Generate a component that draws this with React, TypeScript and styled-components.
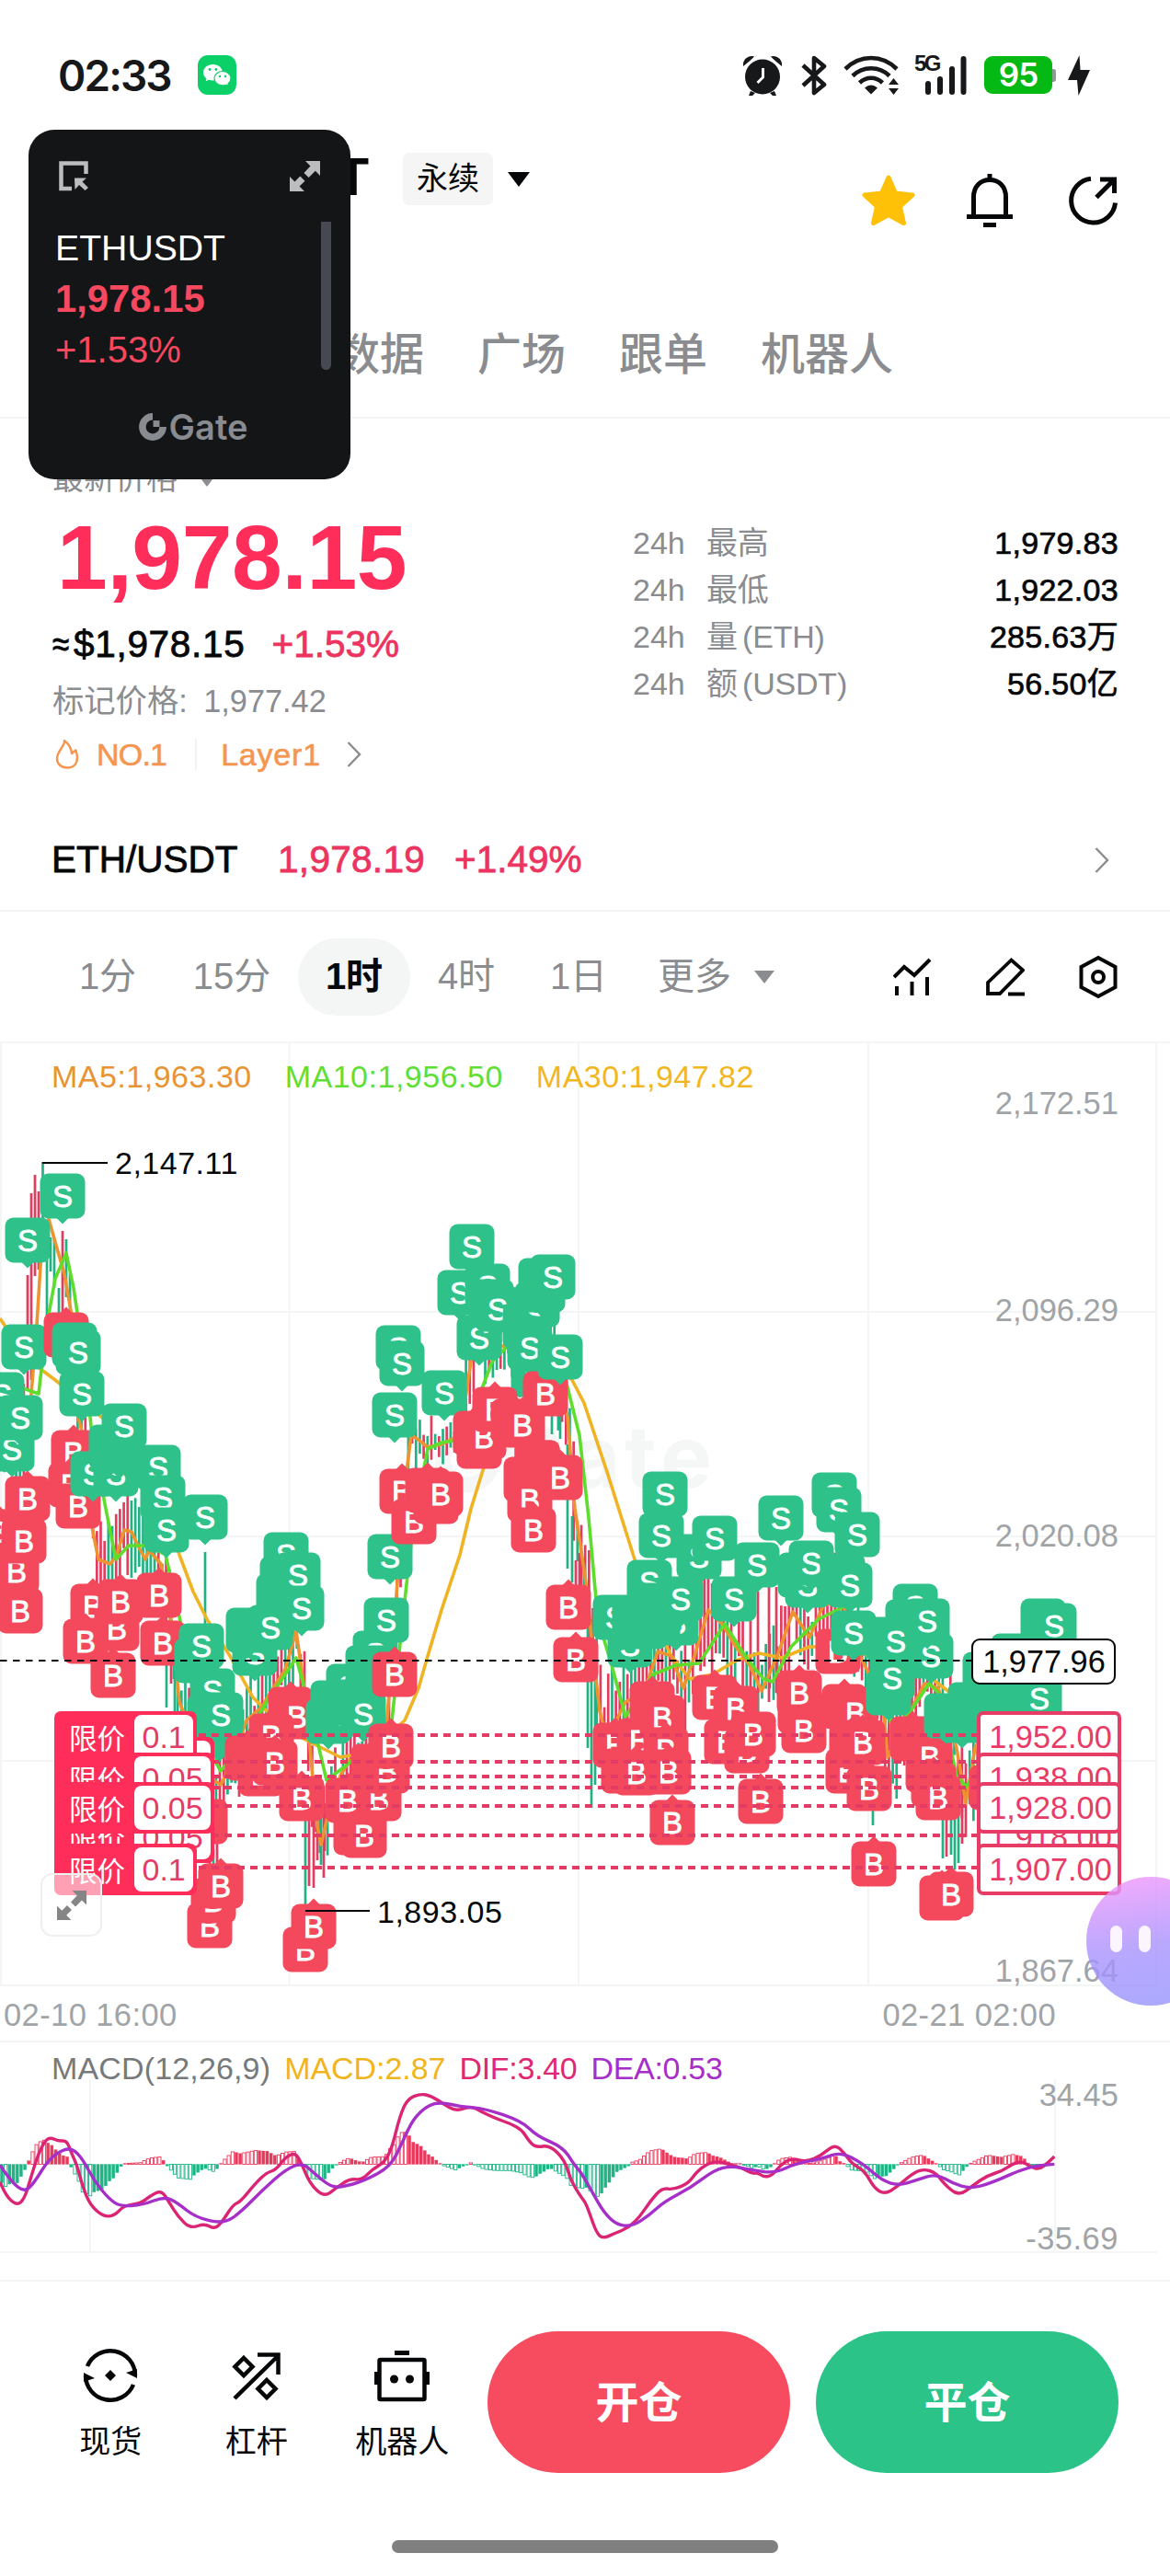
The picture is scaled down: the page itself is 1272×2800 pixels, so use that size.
import React from 'react';
import styled, { createGlobalStyle } from 'styled-components';

const RED = '#f4495d';
const GREEN = '#2fc18a';
const PINK = '#ec3460';
const GREY = '#8a8c8f';
const AXIS = '#a1a4a7';
const LINE = '#f4f5f5';
const FONT = "'Liberation Sans', 'Noto Sans CJK SC', sans-serif";

const GlobalStyle = createGlobalStyle`
    * { box-sizing: border-box; }
    body { margin: 0; background: #fff; }
    svg { display: block; flex-shrink: 0; }
`;

const Screen = styled.div`
    position: relative;
    width: 1272px;
    height: 2800px;
    overflow: hidden;
    background: #fff;
    color: #060708;
    font-family: ${FONT};
    white-space: nowrap;
`;

/* ---------- status bar ---------- */

const StatusBar = styled.div`
    display: flex;
    align-items: center;
    height: 140px;
    padding: 23px 86px 0 63px;
`;

const Clock = styled.span`
    width: 152px;
    font: 600 46px/46px Inter, sans-serif;
    letter-spacing: -1.9px;
    color: #17181a;
`;

const StatusIcons = styled.div`
    display: flex;
    align-items: center;
    margin-left: auto;
`;

const Bluetooth = styled.div`
    margin: 0 18px 0 20px;
`;

const Signal = styled.div`
    position: relative;
    width: 58px;
    height: 46px;
    margin: 0 18px 0 15px;
`;

const SignalTag = styled.span`
    position: absolute;
    left: 0;
    top: 0;
    font: 700 24px/20px 'Liberation Sans', sans-serif;
    letter-spacing: -2.5px;
    color: #17181a;
`;

const Battery = styled.div`
    display: flex;
    align-items: center;
    justify-content: center;
    width: 74px;
    height: 41px;
    border-radius: 9px;
    background: #05b914;
    color: #fff;
    font: 600 35px/41px Inter, sans-serif;
    letter-spacing: -1px;
`;

const BatteryTip = styled.div`
    width: 4px;
    height: 14px;
    margin-right: 12px;
    border-radius: 0 3px 3px 0;
    background: #8f9a90;
`;

/* ---------- header ---------- */

const Header = styled.div`
    display: flex;
    height: 156px;
    padding: 26px 54px 0 131px;
`;

const Title = styled.h1`
    width: 270px;
    margin: 0 37px 0 0;
    text-align: right;
    font-size: 57px;
    line-height: 52px;
    font-weight: 700;
`;

const Badge = styled.span`
    width: 98px;
    height: 57px;
    border-radius: 7px;
    background: #f5f5f5;
    text-align: center;
    font-size: 34px;
    line-height: 57px;
`;

const Caret = styled.i<{ $color?: string; $w: number; $h: number }>`
    width: 0;
    height: 0;
    border-left: ${({ $w }) => $w / 2}px solid transparent;
    border-right: ${({ $w }) => $w / 2}px solid transparent;
    border-top: ${({ $h }) => $h}px solid ${({ $color }) => $color || '#060708'};
`;

const BadgeCaret = styled(Caret)`
    margin: 21px 0 0 16px;
`;

const HeaderActions = styled.div`
    display: flex;
    align-items: center;
    gap: 55px;
    height: 60px;
    margin: 22px 0 0 auto;
`;

const Tabs = styled.div`
    display: flex;
    gap: 58px;
    height: 159px;
    padding: 60px 0 0 365px;
    border-bottom: 2px solid ${LINE};
`;

const Tab = styled.span`
    font-size: 48px;
    line-height: 60px;
    font-weight: 500;
    color: ${GREY};
`;

/* ---------- price summary ---------- */

const Summary = styled.div`
    display: flex;
    justify-content: space-between;
    height: 400px;
    padding: 42px 56px 0 57px;
`;

const PriceCol = styled.div`
    display: flex;
    flex-direction: column;
`;

const PriceLabel = styled.div`
    display: flex;
    align-items: center;
    gap: 22px;
    height: 40px;
    font-size: 34px;
    color: ${GREY};
`;

const LabelCaret = styled(Caret)`
    margin-top: 10px;
`;

const BigPrice = styled.div`
    height: 110px;
    margin: 14px 0 0 5px;
    font-size: 98.5px;
    line-height: 111px;
    font-weight: 700;
    letter-spacing: -0.4px;
    color: #ff2d59;
`;

const SubPrice = styled.div`
    display: flex;
    gap: 29px;
    margin-top: 14px;
    font-size: 40.5px;
    line-height: 50px;
    -webkit-text-stroke: 0.8px currentColor;
`;

const Dollars = styled.span`
    letter-spacing: 0.7px;
`;

const Approx = styled.span`
    display: inline-block;
    width: 23px;
    transform: scaleX(0.82);
    transform-origin: left;
`;

const Rise = styled.span`
    color: ${PINK};
`;

const MarkPrice = styled.div`
    margin-top: 15px;
    font-size: 34.3px;
    line-height: 44px;
    color: ${GREY};
    word-spacing: 8px;
`;

const TagRow = styled.div`
    display: flex;
    align-items: center;
    height: 44px;
    margin-top: 14px;
    font-size: 34px;
    color: #f59650;
    -webkit-text-stroke: 0.6px currentColor;
`;

const TagText = styled.span<{ $spacing: number }>`
    margin-left: 16px;
    letter-spacing: ${({ $spacing }) => $spacing}px;
`;

const TagDivider = styled.i`
    width: 2px;
    height: 34px;
    margin: 0 10px 0 31px;
    background: #f1f1f1;
`;

const TagChevron = styled.div`
    margin-left: 28px;
`;

const Stats = styled.div`
    width: 528px;
    padding-top: 68px;
`;

const StatRow = styled.div`
    display: flex;
    height: 51px;
    font-size: 34px;
    line-height: 51px;
    color: ${GREY};
`;

const StatPeriod = styled.span`
    width: 80px;
`;

const StatLabel = styled.span`
    word-spacing: -4px;
    letter-spacing: -0.2px;
`;

const StatValue = styled.span`
    margin-left: auto;
    color: #060708;
    letter-spacing: 0.3px;
    -webkit-text-stroke: 0.7px currentColor;
`;

const SpotRow = styled.div`
    display: flex;
    align-items: center;
    height: 136px;
    padding: 25px 66px 0 56px;
    border-bottom: 2px solid ${LINE};
    font-size: 40.5px;
    -webkit-text-stroke: 0.8px currentColor;
`;

const SpotPair = styled.span`
    width: 246px;
`;

const SpotPrice = styled.span`
    width: 192px;
    color: ${PINK};
    letter-spacing: 0.3px;
`;

const Push = styled.div`
    margin-left: auto;
`;

/* ---------- time frames ---------- */

const Frames = styled.div`
    display: flex;
    align-items: center;
    height: 143px;
    padding: 0 57px 0 54px;
    border-bottom: 2px solid ${LINE};
`;

const Frame = styled.span<{ $w: number; $active?: boolean }>`
    width: ${({ $w }) => $w}px;
    height: 84px;
    border-radius: 42px;
    text-align: center;
    font-size: 40px;
    line-height: 83px;
    font-weight: ${({ $active }) => ($active ? 600 : 400)};
    background: ${({ $active }) => ($active ? '#f4f5f5' : 'transparent')};
    color: ${({ $active }) => ($active ? '#060708' : GREY)};
`;

const FrameTools = styled.div`
    display: flex;
    align-items: center;
    gap: 59px;
    margin-left: auto;
`;

/* ---------- chart ---------- */

const ChartPanel = styled.div`
    position: relative;
    height: 1084px;
`;

const Legend = styled.div<{ $gap: number; $top: number }>`
    position: absolute;
    left: 56px;
    top: ${({ $top }) => $top}px;
    display: flex;
    gap: ${({ $gap }) => $gap}px;
    font-size: 34px;
    line-height: 40px;
`;

const LegendItem = styled.span<{ $color: string; $spacing?: number }>`
    color: ${({ $color }) => $color};
    letter-spacing: ${({ $spacing }) => $spacing || 0}px;
`;

const OrderTag = styled.div<{ $top: number }>`
    position: absolute;
    left: 59px;
    top: ${({ $top }) => $top}px;
    display: flex;
    align-items: center;
    height: 56px;
    padding: 0 4px 0 16px;
    border-radius: 7px;
    background: #ff2d59;
    color: #fff;
    font-size: 30.5px;
`;

const OrderSize = styled.span`
    height: 48px;
    margin-left: 10px;
    padding: 0 8.5px;
    border-radius: 8px;
    background: #fff;
    color: #e23c66;
    font-size: 34px;
    line-height: 48px;
`;

const PriceTag = styled.div<{ $top: number }>`
    position: absolute;
    left: 1062px;
    top: ${({ $top }) => $top}px;
    width: 157px;
    height: 56px;
    padding-left: 3px;
    border: 4px solid #e63c66;
    border-radius: 7px;
    background: #fff;
    text-align: center;
    color: #e63c66;
    font-size: 34.3px;
    line-height: 49px;
`;

const CurrentPrice = styled(PriceTag)`
    left: 1056px;
    padding-left: 1px;
    height: 50px;
    border: 2px solid #060708;
    border-radius: 9px;
    color: #060708;
    line-height: 47px;
`;

const Expand = styled.div`
    position: absolute;
    left: 44px;
    top: 902px;
    display: flex;
    align-items: center;
    justify-content: center;
    width: 67px;
    height: 69px;
    border: 2px solid #efefef;
    border-radius: 13px;
    background: rgba(255, 255, 255, 0.55);
`;

const Assistant = styled.div`
    position: absolute;
    left: 1181px;
    top: 906px;
    display: flex;
    gap: 18px;
    width: 140px;
    height: 140px;
    padding: 53px 0 0 26px;
    border-radius: 70px;
    background: linear-gradient(170deg, rgba(245, 150, 252, 0.8), rgba(168, 146, 254, 0.8) 52%, rgba(148, 148, 252, 0.8));
`;

const Eye = styled.i`
    width: 13px;
    height: 29px;
    border-radius: 7px;
    background: #fbf5ff;
`;

const MacdPanel = styled.div`
    position: relative;
    height: 262px;
    border-top: 2px solid ${LINE};
    border-bottom: 2px solid ${LINE};
`;

/* ---------- bottom bar ---------- */

const BottomBar = styled.div`
    display: flex;
    height: 281px;
    padding: 54px 56px 0 41px;
`;

const NavItem = styled.div`
    display: flex;
    flex-direction: column;
    align-items: center;
    width: 158.5px;
    padding-top: 18px;
    font-size: 34px;
    line-height: 44px;
    gap: 20px;
`;

const TradeButton = styled.div<{ $color: string; $gap: number }>`
    width: 329px;
    height: 154px;
    margin-left: ${({ $gap }) => $gap}px;
    border-radius: 77px;
    background: ${({ $color }) => $color};
    color: #fff;
    text-align: center;
    font-size: 47px;
    line-height: 155px;
    font-weight: 700;
`;

const HomeBar = styled.i`
    position: absolute;
    left: 426px;
    bottom: 25px;
    width: 420px;
    height: 14px;
    border-radius: 7px;
    background: #808080;
`;

/* ---------- floating ticker ---------- */

const Floating = styled.div`
    position: absolute;
    left: 31px;
    top: 141px;
    width: 350px;
    height: 380px;
    padding: 34px 21px 0 29px;
    border-radius: 28px;
    background: #131517;
    color: #fff;
    line-height: 57px;
`;

const FloatTop = styled.div`
    display: flex;
    justify-content: space-between;
    padding: 0 12px 0 4px;
    margin-bottom: 33px;
`;

const FloatBody = styled.div`
    display: flex;
    justify-content: space-between;
    height: 161px;
`;

const FloatLine = styled.div<{ $size: number; $bold?: boolean; $red?: boolean }>`
    height: 55px;
    padding-top: 2px;
    font-size: ${({ $size }) => $size}px;
    line-height: 54px;
    font-weight: ${({ $bold }) => ($bold ? 700 : 400)};
    color: ${({ $red }) => ($red ? '#f6485f' : '#fff')};
`;

const FloatScroll = styled.i`
    width: 11px;
    height: 161px;
    border-radius: 0 0 6px 6px;
    background: #474952;
`;

const FloatLogo = styled.div`
    display: flex;
    align-items: center;
    justify-content: center;
    gap: 3px;
    height: 40px;
    margin-top: 42px;
    font: 600 38px/40px Inter, sans-serif;
    color: #888b90;
`;

/* ---------- chart data ---------- */

type Pt = [number, number];

const MA5: Pt[] = [[0, 1580], [20, 1570], [32, 1540], [40, 1440], [45, 1360], [53, 1325], [60, 1350], [70, 1385], [78, 1430], [85, 1540], [90, 1560], [97, 1620], [100, 1660], [107, 1695], [120, 1700], [127, 1690], [135, 1663], [143, 1665], [150, 1680], [158, 1695], [162, 1685], [175, 1700], [185, 1750], [195, 1850], [215, 1900], [232, 1935], [240, 1940], [250, 1920], [268, 1870], [285, 1855], [300, 1830], [310, 1815], [322, 1773], [330, 1830], [337, 1900], [345, 1985], [349, 2005], [356, 1975], [370, 1930], [380, 1913], [400, 1930], [420, 1880], [432, 1720], [437, 1640], [447, 1560], [455, 1565], [465, 1573], [480, 1570], [500, 1560], [512, 1480], [520, 1450], [550, 1465], [575, 1440], [600, 1460], [617, 1540], [625, 1640], [637, 1720], [645, 1800], [652, 1860], [660, 1890], [680, 1850], [700, 1840], [715, 1795], [730, 1800], [743, 1835], [755, 1800], [770, 1750], [785, 1765], [800, 1790], [815, 1810], [828, 1838], [845, 1800], [862, 1752], [880, 1780], [895, 1745], [915, 1740], [935, 1800], [960, 1850], [965, 1910], [985, 1870], [1005, 1830], [1020, 1835], [1040, 1900], [1050, 1960], [1060, 1900], [1080, 1860], [1130, 1800]];
const MA10: Pt[] = [[0, 1500], [42, 1515], [50, 1445], [60, 1390], [72, 1362], [80, 1400], [92, 1480], [100, 1560], [115, 1640], [126, 1695], [140, 1680], [160, 1680], [180, 1690], [200, 1780], [220, 1890], [240, 1925], [260, 1900], [290, 1850], [322, 1802], [335, 1850], [355, 1935], [375, 1920], [400, 1900], [425, 1880], [440, 1740], [450, 1650], [465, 1575], [480, 1568], [500, 1565], [520, 1520], [535, 1480], [555, 1460], [580, 1440], [610, 1480], [630, 1560], [640, 1650], [650, 1760], [665, 1810], [680, 1866], [710, 1820], [735, 1810], [760, 1808], [788, 1765], [810, 1800], [830, 1825], [840, 1828], [860, 1790], [890, 1760], [920, 1745], [950, 1790], [970, 1880], [990, 1860], [1010, 1830], [1020, 1840], [1040, 1930], [1050, 1942], [1080, 1900], [1130, 1830]];
const MA30: Pt[] = [[0, 1433], [6, 1442], [20, 1470], [60, 1500], [110, 1540], [155, 1575], [195, 1690], [210, 1730], [225, 1760], [250, 1800], [275, 1845], [290, 1860], [330, 1890], [370, 1910], [400, 1905], [440, 1870], [455, 1835], [465, 1800], [480, 1750], [500, 1690], [512, 1640], [525, 1598], [545, 1540], [570, 1500], [600, 1480], [622, 1500], [635, 1525], [660, 1600], [690, 1695], [715, 1770], [730, 1800], [750, 1825], [775, 1820], [800, 1805], [825, 1797], [850, 1802], [880, 1790], [910, 1790], [1000, 1815], [1020, 1830], [1060, 1860], [1130, 1840]];

// traced wicks that stick out of the noise: x, high, low, up?
const WICKS: [number, number, number, boolean][] = [
    [30, 1386, 1510, true], [34, 1297, 1500, true], [38, 1277, 1387, true], [42, 1295, 1380, true], [46.5, 1263, 1370, false],
    [51, 1326, 1430, false], [55, 1345, 1382, false], [59, 1345, 1400, false], [64, 1400, 1480, false], [68, 1338, 1440, true], [72, 1347, 1410, false],
    [223, 1687, 1770, false], [181, 1800, 1856, false], [186, 1800, 1830, true], [190, 1800, 1862, false],
    [332, 1975, 2076, false], [336, 1975, 2050, true], [341, 1975, 2052, true], [345, 1975, 2022, true], [349, 1975, 2027, false], [353, 1960, 2012, true],
    [600, 1520, 1559, false], [609, 1520, 1564, false], [617, 1570, 1705, false], [622, 1648, 1720, false], [626, 1696, 1740, true], [630, 1688, 1740, true], [635, 1700, 1760, false],
    [639, 1760, 1900, false], [643, 1760, 1965, false], [647, 1820, 1940, false], [824, 1730, 1840, true], [836, 1725, 1850, true], [844, 1725, 1840, true],
    [949, 1960, 1984, false], [1025, 1970, 2020, false], [1029, 1970, 2018, true], [1034, 1970, 2016, false], [1038, 1970, 2032, false], [1042, 1970, 2025, false], [1046, 1930, 2004, true],
    [232, 2010, 2030, false], [236, 2000, 2035, true], [228, 1980, 2040, true],
];

// trade markers in paint order: side, centre x, centre y; lower case ones carry no letter
const MARKERS: ['S' | 'B' | 's' | 'b', number, number][] = [
    ['S', 68, 1300], ['S', 30, 1348], ['S', 26, 1464], ['S', 2, 1516], ['S', 13, 1575], ['S', 22, 1541],
    ['b', 72, 1451], ['s', 81, 1462], ['S', 85, 1470], ['S', 89, 1515],
    ['B', 80, 1579], ['B', 77, 1614], ['B', 85, 1637],
    ['B', 30, 1629], ['B', -3, 1665], ['B', 18, 1708], ['B', 26, 1675], ['B', 22, 1751],
    ['S', 101, 1602], ['S', 126, 1602], ['S', 130, 1577], ['s', 121, 1573], ['S', 135, 1550],
    ['S', 172, 1595], ['S', 177, 1628], ['S', 223, 1649], ['S', 181, 1663],
    ['B', 101, 1746], ['B', 127, 1770], ['B', 123, 1821], ['B', 93, 1784], ['B', 131, 1741], ['B', 173, 1734], ['B', 177, 1786],
    ['b', 223, 1980], ['B', 228, 2093], ['B', 232, 2066], ['B', 240, 2050],
    ['s', 214, 1805], ['S', 219, 1789], ['s', 238, 1885], ['S', 231, 1838], ['s', 228, 1866], ['S', 240, 1864],
    ['S', 277, 1797], ['s', 270, 1772], ['S', 311, 1690], ['s', 307, 1716], ['s', 303, 1735], ['S', 294, 1769], ['S', 324, 1712], ['S', 328, 1748],
    ['b', 316, 1858], ['B', 323, 1866], ['B', 295, 1887], ['B', 284, 1928], ['b', 269, 1911], ['B', 299, 1916], ['B', 328, 1955],
    ['B', 332, 2119], ['B', 341, 2094],
    ['S', 357, 1871], ['S', 367, 1863], ['s', 362, 1851], ['S', 379, 1833], ['S', 408, 1797], ['s', 400, 1813], ['s', 387, 1850], ['S', 395, 1863], ['S', 420, 1761], ['S', 424, 1692],
    ['b', 387, 1992], ['B', 396, 1995], ['B', 378, 1957], ['B', 412, 1955], ['b', 406, 1920], ['B', 421, 1925], ['B', 425, 1898], ['B', 429, 1820],
    ['S', 433, 1465], ['S', 437, 1482], ['S', 429, 1538], ['S', 483, 1514],
    ['B', 437, 1621], ['B', 450, 1654], ['b', 465, 1620], ['b', 474, 1632], ['B', 479, 1624],
    ['S', 500, 1405], ['S', 530, 1398], ['S', 513, 1355], ['S', 521, 1454], ['s', 534, 1415], ['S', 541, 1423],
    ['s', 571, 1442], ['S', 580, 1494], ['S', 576, 1465], ['s', 588, 1392], ['S', 584, 1418], ['s', 590, 1402], ['S', 601, 1388],
    ['b', 517, 1558], ['B', 521, 1572], ['B', 526, 1562], ['B', 538, 1532], ['b', 584, 1590], ['b', 572, 1608], ['B', 576, 1630], ['B', 580, 1663], ['b', 558, 1545], ['B', 568, 1549], ['b', 584, 1590], ['B', 593, 1515], ['B', 609, 1606],
    ['S', 609, 1475], ['B', 618, 1747], ['B', 626, 1804],
    ['S', 685, 1788], ['S', 706, 1720], ['s', 712, 1745], ['S', 669, 1758], ['S', 701, 1768], ['s', 690, 1762], ['S', 735, 1764], ['s', 715, 1762], ['S', 740, 1738],
    ['S', 723, 1624], ['S', 719, 1669], ['S', 760, 1692], ['S', 777, 1672], ['S', 798, 1738], ['S', 823, 1701], ['S', 849, 1650],
    ['B', 669, 1897], ['b', 678, 1925], ['B', 695, 1892], ['B', 692, 1927], ['b', 709, 1852], ['B', 720, 1867], ['B', 724, 1902], ['B', 727, 1926], ['B', 731, 1981],
    ['B', 777, 1845], ['B', 790, 1893], ['B', 800, 1857], ['B', 812, 1903], ['B', 819, 1885], ['B', 827, 1958], ['b', 870, 1860], ['B', 874, 1881], ['B', 869, 1840],
    ['s', 870, 1712], ['S', 878, 1723], ['S', 882, 1699], ['S', 907, 1625], ['S', 912, 1641], ['S', 916, 1713], ['S', 932, 1668], ['S', 924, 1723],
    ['B', 911, 1795], ['S', 928, 1775], ['b', 918, 1855], ['B', 922, 1925], ['B', 930, 1862], ['b', 926, 1897], ['B', 938, 1894], ['B', 945, 1944], ['B', 950, 2026],
    ['S', 995, 1746], ['s', 966, 1782], ['s', 987, 1763], ['S', 974, 1784], ['s', 966, 1840], ['S', 970, 1824], ['S', 1012, 1800], ['S', 1008, 1762],
    ['b', 992, 1890], ['b', 1009, 1924], ['B', 1011, 1910], ['b', 1015, 1940], ['B', 1020, 1954], ['b', 1024, 2063], ['B', 1034, 2059], ['b', 1078, 1943],
    ['s', 1029, 1865], ['s', 1046, 1870], ['s', 1055, 1853], ['s', 1071, 1820], ['s', 1102, 1800], ['S', 1096, 1828], ['s', 1090, 1850], ['S', 1130, 1846], ['s', 1134, 1762], ['S', 1146, 1767],
];

const DIF_A: Pt[] = [[0, 695], [15, 740], [45, 772], [65, 750], [80, 690], [100, 610], [120, 560], [135, 550], [155, 562], [178, 560], [190, 600], [205, 640], [220, 710], [240, 770], [275, 808], [305, 805], [330, 772], [375, 765], [400, 740], [430, 722], [450, 760], [475, 810], [508, 847], [545, 830], [572, 850], [595, 820], [620, 770], [640, 760], [680, 700], [710, 665], [735, 655], [760, 615], [785, 600], [800, 625], [825, 700], [863, 745], [895, 715], [930, 685], [965, 688], [990, 655], [1025, 630], [1045, 580], [1065, 480], [1085, 425], [1120, 407], [1150, 415], [1180, 440], [1215, 465], [1255, 447], [1285, 468], [1320, 488], [1360, 505], [1390, 525], [1405, 555], [1425, 583], [1465, 575], [1505, 625], [1520, 690], [1548, 745]];
const DIF_B: Pt[] = [[10, 760], [20, 790], [40, 860], [57, 880], [90, 862], [125, 845], [155, 810], [185, 755], [215, 715], [245, 720], [285, 700], [305, 665], [335, 635], [365, 627], [405, 642], [430, 650], [455, 668], [470, 665], [488, 680], [510, 672], [530, 640], [560, 617], [600, 630], [640, 608], [675, 572], [700, 600], [720, 635], [755, 660], [780, 715], [808, 735], [840, 712], [880, 670], [910, 652], [945, 665], [965, 700], [1005, 742], [1045, 705], [1080, 675], [1120, 660], [1150, 635], [1175, 628], [1195, 645], [1220, 655], [1245, 630], [1260, 612]];
const DEA_A: Pt[] = [[0, 640], [30, 695], [65, 728], [90, 700], [130, 620], [170, 588], [195, 588], [220, 620], [250, 690], [290, 750], [320, 775], [380, 770], [440, 742], [475, 765], [520, 810], [595, 832], [640, 795], [700, 720], [760, 655], [805, 632], [840, 670], [880, 710], [910, 712], [970, 692], [1040, 645], [1070, 570], [1100, 490], [1140, 445], [1175, 435], [1230, 450], [1290, 455], [1390, 497], [1430, 545], [1500, 582], [1530, 640]];
const DEA_B: Pt[] = [[0, 665], [30, 730], [60, 795], [95, 835], [135, 840], [180, 805], [220, 760], [290, 715], [355, 655], [400, 643], [450, 655], [515, 667], [570, 635], [640, 620], [690, 597], [750, 635], [800, 690], [845, 707], [890, 690], [945, 668], [990, 700], [1035, 717], [1090, 700], [1190, 645], [1260, 637]];

const scaleHalf = (pts: Pt[], x0: number): Pt[] => pts.map(([x, y]) => [x0 + x / 2.45, 2140 + y / 3]);
const DIF = [...scaleHalf(DIF_A, 0), ...scaleHalf(DIF_B, 632)];
const DEA = [...scaleHalf(DEA_A, 0), ...scaleHalf(DEA_B, 632)];
const ZERO = 2352.5;
const STEP = 4.18;

const at = (pts: Pt[], x: number) => {
    const i = Math.max(1, pts.findIndex((p) => p[0] >= x));
    const [x0, y0] = pts[i - 1];
    const [x1, y1] = pts[i];
    return y0 + ((y1 - y0) * (x - x0)) / (x1 - x0);
};

const noise = (n: number) => {
    const v = Math.sin(n * 127.1) * 43758.5453;
    return v - Math.floor(v);
};

const poly = (pts: Pt[]) => pts.map((p) => p.join(',')).join(' ');

// softens a traced line through the midpoints of its segments
const smooth = (pts: Pt[]) => {
    let d = `M${pts[0][0]} ${pts[0][1]}`;
    for (let i = 1; i < pts.length - 1; i++) {
        const mx = (pts[i][0] + pts[i + 1][0]) / 2;
        const my = (pts[i][1] + pts[i + 1][1]) / 2;
        d += `Q${pts[i][0]} ${pts[i][1]} ${mx} ${my}`;
    }
    const last = pts[pts.length - 1];
    return `${d}L${last[0]} ${last[1]}`;
};

const CANDLES = Array.from({ length: 268 }, (_, i) => {
    const x = 5 + i * STEP;
    const mid = at(MA5, x) + (noise(i) - 0.5) * 34;
    const size = 18 + noise(i + 500) * 40;
    const calm = x > 445 && x < 500 ? 0.45 : 1;
    return { x, top: mid - size * calm, bottom: mid + size * calm, up: noise(i + 900) > 0.5 };
}).filter((c) => c.x > 75 || c.x < 28);

const BARS = Array.from({ length: 273 }, (_, i) => {
    const x = 2 + i * STEP;
    const diff = at(DEA, x) - at(DIF, x);
    const before = i ? at(DEA, x - STEP) - at(DIF, x - STEP) : diff;
    return { x, h: diff, hollow: Math.abs(diff) > Math.abs(before) };
});

const LIMITS = [1886, 1915, 1931, 1943, 1963, 1995, 2030];

/* ---------- drawings ---------- */

const Marker = ({ side, x, y }: { side: 'S' | 'B' | 's' | 'b'; x: number; y: number }) => {
    const sell = side === 'S' || side === 's';
    return (
        <g transform={`translate(${x} ${y})`} fill={sell ? GREEN : RED}>
            <rect x={-24.5} y={-24.5} width={49} height={49} rx={9} />
            <path d={sell ? 'M-7 23.5L0 30.5L7 23.5Z' : 'M-7 -23.5L0 -30.5L7 -23.5Z'} />
            {(side === 'S' || side === 'B') && (
                <text y={12} fill="#f7fffb" stroke="#f7fffb" strokeWidth={0.9} fontSize={33} textAnchor="middle">
                    {side}
                </text>
            )}
        </g>
    );
};

const GateMark = ({ size, color }: { size: number; color: string }) => (
    <svg width={size} height={size} viewBox="0 0 28 28">
        <path d="M14 3.6A10.4 10.4 0 1 0 24.4 14" fill="none" stroke={color} strokeWidth={7} />
        <path d="M14.500 7.5h6.5V14h-6.500z" fill={color} />
    </svg>
);

const ExpandIcon = ({ size, color }: { size: number; color: string }) => (
    <svg width={size} height={size} viewBox="0 0 32 32" fill={color}>
        <path d="M16.500 0H32V15.500L27 10.500L20 17.500L15 12.500L21.800 5.300Z" />
        <path d="M0 16.500L5.300 21.800L11 16L16 21L10.200 26.700L15.500 32H0Z" />
    </svg>
);

const Chevron = ({ h }: { h: number }) => (
    <svg width={16} height={h} viewBox="0 0 16 28" fill="none" stroke="#8a8c8f" strokeWidth={2.4}>
        <path d="M1.500 1L14 14L1.500 27" />
    </svg>
);

const PriceChart = () => (
    <svg width={1272} height={1084} viewBox="0 1134 1272 1084" fontFamily={FONT}>
        <g stroke={LINE} strokeWidth={2}>
            {[1426, 1670, 1914, 2158].map((y) => (
                <path key={y} d={`M0 ${y}H1258`} />
            ))}
            {[1, 314.5, 629, 944, 1257].map((x) => (
                <path key={x} d={`M${x} 1134V2158`} />
            ))}
        </g>
        <g fill="#f5f6f6">
            <path d="M508 1560A27 27 0 1 0 535 1588" fill="none" stroke="#f5f6f6" strokeWidth={17} />
            <text x={774} y={1617} fontFamily="Inter" fontWeight={700} fontSize={94} textAnchor="end" textLength={230}>
                Gate
            </text>
        </g>
        <g fill={AXIS} fontSize={34.5} textAnchor="end">
            <text x={1216} y={1211}>2,172.51</text>
            <text x={1216} y={1436}>2,096.29</text>
            <text x={1216} y={1681}>2,020.08</text>
            <text x={1216} y={2154}>1,867.64</text>
            <text x={1148} y={2202} letterSpacing={0.4}>02-21 02:00</text>
            <text x={4} y={2202} letterSpacing={0.4} textAnchor="start">02-10 16:00</text>
        </g>
        <g strokeWidth={2.7}>
            {CANDLES.map((c) => (
                <path key={c.x} d={`M${c.x} ${c.top}V${c.bottom}`} stroke={c.up ? '#e23c5f' : '#22b183'} />
            ))}
            {WICKS.map(([x, top, bottom, up]) => (
                <path key={`${x}-${top}`} d={`M${x} ${top}V${bottom}`} stroke={up ? '#e23c5f' : '#22b183'} />
            ))}
        </g>
        <g fill="none" strokeWidth={3.6} strokeLinejoin="round">
            <polyline points={poly(MA30)} stroke="#f0b323" />
            <polyline points={poly(MA5)} stroke="#ed9430" />
            <polyline points={poly(MA10)} stroke="#5fdd2c" />
        </g>
        {MARKERS.map(([side, x, y], i) => (
            <Marker key={i} side={side} x={x} y={y} />
        ))}
        <g stroke="#e23c64" strokeWidth={4} strokeDasharray="8 6">
            {LIMITS.map((y) => (
                <path key={y} d={`M216 ${y}H1062`} />
            ))}
        </g>
        <path d="M0 1805H1057" stroke="#060708" strokeWidth={2} strokeDasharray="7.500 6.500" />
        <g stroke="#060708" strokeWidth={2}>
            <path d="M46 1264H117" />
            <path d="M332 2077H402" />
        </g>
        <g fill="#060708" fontSize={34} letterSpacing={0.5}>
            <text x={125} y={1276}>2,147.11</text>
            <text x={410} y={2090}>1,893.05</text>
        </g>
    </svg>
);

const MacdChart = () => (
    <svg width={1272} height={258} viewBox="0 2220 1272 258" fontFamily={FONT}>
        <g stroke={LINE} strokeWidth={2}>
            <path d="M98 2260V2448" />
            <path d="M1147 2260V2448" />
            <path d="M0 2448H1258" />
        </g>
        <g fill={AXIS} fontSize={34.5} textAnchor="end">
            <text x={1216} y={2289}>34.45</text>
            <text x={1216} y={2445} letterSpacing={0.5}>-35.69</text>
        </g>
        {BARS.map(({ x, h, hollow }) => {
            const color = h > 0 ? '#e8395c' : '#1eb586';
            const size = Math.max(1, Math.abs(h));
            return (
                <rect
                    key={x}
                    x={x - 1.6}
                    y={h > 0 ? ZERO - size : ZERO}
                    width={3.2}
                    height={size}
                    fill={hollow ? '#fff' : color}
                    stroke={color}
                    strokeWidth={hollow ? 0.9 : 0.3}
                />
            );
        })}
        <g fill="none" strokeWidth={3.4} strokeLinejoin="round">
            <path d={smooth(DIF)} stroke="#dc2474" />
            <path d={smooth(DEA)} stroke="#a52fc8" />
        </g>
    </svg>
);

const StatusRight = () => (
    <StatusIcons>
        <svg width={44} height={46} viewBox="0 0 44 46">
            <g fill="#17181a">
                <ellipse cx={22} cy={24.5} rx={19} ry={19} />
                <path d="M1 13C0 6 6 0 14 2.500Z" />
                <path d="M43 13C44 6 38 0 30 2.500Z" />
                <path d="M9 40L7 45H11L14 42ZM35 40L37 45H33L30 42Z" />
            </g>
            <path d="M1 16L15 2M43 16L29 2" stroke="#fff" strokeWidth={2} />
            <path d="M22.500 15V25L16.500 31" fill="none" stroke="#fff" strokeWidth={3} />
        </svg>
        <Bluetooth>
            <svg width={28} height={46} viewBox="0 0 28 46">
                <path d="M2 12L25 33L14 42V4L25 13L2 34" fill="none" stroke="#17181a" strokeWidth={4.6} strokeLinejoin="round" />
            </svg>
        </Bluetooth>
        <svg width={62} height={46} viewBox="0 0 62 46" fill="none" stroke="#17181a" strokeWidth={4.6}>
            <path d="M2 16C18 0 42 0 58 16" />
            <path d="M10 23.500C21 12.500 39 12.500 50 23.500" />
            <path d="M17.500 31C25 24 35 24 42.500 31" />
            <path d="M23 36.500Q30 30.500 37 36.500L30 43.500Z" fill="#17181a" stroke="none" />
            <path d="M49 33L54.500 26L60 33ZM49 37L54.500 44L60 37Z" fill="#17181a" stroke="none" />
        </svg>
        <Signal>
            <SignalTag>5G</SignalTag>
            <svg width={58} height={46} viewBox="0 0 58 46" stroke="#17181a" strokeWidth={6} strokeLinecap="round">
                <path d="M15 32V41M28 27V41M41 16V41M53.500 5V41" />
            </svg>
        </Signal>
        <Battery>95</Battery>
        <BatteryTip />
        <svg width={26} height={46} viewBox="0 0 26 46" fill="#17181a">
            <path d="M13.500 1L1 28H11L12.500 45L25 17H14.500Z" />
        </svg>
    </StatusIcons>
);

const STATS = [
    ['最高', '1,979.83'],
    ['最低', '1,922.03'],
    ['量 (ETH)', '285.63万'],
    ['额 (USDT)', '56.50亿'],
];

const App = () => (
    <Screen>
        <GlobalStyle />
        <StatusBar>
            <Clock>02:33</Clock>
            <svg width={42} height={43} viewBox="0 0 42 43">
                <rect width={42} height={43} rx={11} fill="#0bd068" />
                <g fill="#fff">
                    <path d="M16.500 10C10.500 10 6 14 6 18.800C6 21.500 7.400 23.800 9.500 25.400L8.700 28.300L12 26.700C13.400 27.200 15 27.500 16.500 27.500C22.500 27.500 27 23.600 27 18.800S22.500 10 16.500 10Z" />
                    <path d="M27 17.500C32 17.500 36 21 36 25.200C36 27.500 34.900 29.500 33 30.900L33.700 33.500L30.900 32.200C29.700 32.600 28.400 32.900 27 32.900C22 32.900 18 29.400 18 25.200S22 17.500 27 17.500Z" stroke="#0bd068" strokeWidth={1.2} />
                </g>
                <g fill="#0bd068">
                    <circle cx={13} cy={15.5} r={1.4} /><circle cx={20} cy={15.5} r={1.4} />
                    <circle cx={24} cy={23} r={1.2} /><circle cx={30} cy={23} r={1.2} />
                </g>
            </svg>
            <StatusRight />
        </StatusBar>

        <Header>
            <Title>ETHUSDT</Title>
            <Badge>永续</Badge>
            <BadgeCaret $w={25} $h={16} />
            <HeaderActions>
                <svg width={60} height={58} viewBox="0 0 60 58">
                    <path d="M30 4L37.500 21L56 23L42.500 35.500L46.500 53.500L30 44.500L13.500 53.500L17.500 35.500L4 23L22.500 21Z" fill="#ffc008" stroke="#ffc008" strokeWidth={5} strokeLinejoin="round" />
                </svg>
                <svg width={50} height={60} viewBox="0 0 50 60" fill="none" stroke="#060708" strokeWidth={5}>
                    <path d="M25 1V8M7.500 47V26C7.500 14.500 15 7.500 25 7.500S42.500 14.500 42.500 26V47M0 47.500H50M18 56.500H32" />
                </svg>
                <svg width={62} height={54} viewBox="-4 0 58 54" fill="none" stroke="#060708" strokeWidth={5}>
                    <path d="M24 3.200A24 24 0 1 0 50.500 29.500" />
                    <path d="M34 4H49.500V19M49 4.500L30 23.500" />
                </svg>
            </HeaderActions>
        </Header>
        <Tabs>
            <Tab>数据</Tab>
            <Tab>广场</Tab>
            <Tab>跟单</Tab>
            <Tab>机器人</Tab>
        </Tabs>

        <Summary>
            <PriceCol>
                <PriceLabel>
                    最新价格
                    <LabelCaret $w={20} $h={13} $color={GREY} />
                </PriceLabel>
                <BigPrice>1,978.15</BigPrice>
                <SubPrice>
                    <Dollars><Approx>≈</Approx>$1,978.15</Dollars>
                    <Rise>+1.53%</Rise>
                </SubPrice>
                <MarkPrice>标记价格: 1,977.42</MarkPrice>
                <TagRow>
                    <svg width={32} height={34} viewBox="-3 0 32 34" fill="none" stroke="#f59650" strokeWidth={2.4} strokeLinejoin="round">
                        <path d="M10 2C11 8 2 13 2 21.500C2 27.500 6.500 31.500 13 31.500S24 27.500 24 20.500C24 17 23 15 22.500 12.500L18 16C17.500 10 14 5 10 2Z" />
                    </svg>
                    <TagText $spacing={-0.8}>NO.1</TagText>
                    <TagDivider />
                    <TagText $spacing={0.8}>Layer1</TagText>
                    <TagChevron><Chevron h={28} /></TagChevron>
                </TagRow>
            </PriceCol>
            <Stats>
                {STATS.map(([label, value]) => (
                    <StatRow key={label}>
                        <StatPeriod>24h</StatPeriod>
                        <StatLabel>{label}</StatLabel>
                        <StatValue>{value}</StatValue>
                    </StatRow>
                ))}
            </Stats>
        </Summary>

        <SpotRow>
            <SpotPair>ETH/USDT</SpotPair>
            <SpotPrice>1,978.19</SpotPrice>
            <Rise>+1.49%</Rise>
            <Push><Chevron h={28} /></Push>
        </SpotRow>

        <Frames>
            <Frame $w={126}>1分</Frame>
            <Frame $w={144}>15分</Frame>
            <Frame $w={122} $active>1时</Frame>
            <Frame $w={122}>4时</Frame>
            <Frame $w={122}>1日</Frame>
            <Frame $w={130}>更多</Frame>
            <Caret $w={22} $h={14} $color={GREY} />
            <FrameTools>
                <svg width={42} height={44} viewBox="0 0 42 44" fill="none" stroke="#060708" strokeWidth={4}>
                    <path d="M1 22L12 11L23 20L40 3M4 32V42M20.500 27V42M37 22V42" />
                </svg>
                <svg width={42} height={44} viewBox="0 0 42 44" fill="none" stroke="#060708" strokeWidth={3.8}>
                    <path d="M2 40V28L27.500 3.500L40 14.500L15 40ZM24 40.500H42" />
                </svg>
                <svg width={42} height={48} viewBox="0 0 42 48" fill="none" stroke="#060708" strokeWidth={4}>
                    <path d="M21 3L39.500 13V35L21 45L2.500 35V13Z" />
                    <circle cx={21} cy={24} r={6} />
                </svg>
            </FrameTools>
        </Frames>

        <ChartPanel>
            <PriceChart />
            <Legend $gap={36} $top={16}>
                <LegendItem $spacing={0.5} $color="#e89435">MA5:1,963.30</LegendItem>
                <LegendItem $spacing={0.5} $color="#5fdf35">MA10:1,956.50</LegendItem>
                <LegendItem $spacing={0.5} $color="#f2b71f">MA30:1,947.82</LegendItem>
            </Legend>
            <OrderTag $top={754}>限价<OrderSize>0.05</OrderSize></OrderTag>
            <OrderTag $top={726}>限价<OrderSize>0.1</OrderSize></OrderTag>
            <OrderTag $top={771}>限价<OrderSize>0.05</OrderSize></OrderTag>
            <OrderTag $top={835}>限价<OrderSize>0.05</OrderSize></OrderTag>
            <OrderTag $top={803}>限价<OrderSize>0.05</OrderSize></OrderTag>
            <OrderTag $top={870}>限价<OrderSize>0.1</OrderSize></OrderTag>
            <CurrentPrice $top={647}>1,977.96</CurrentPrice>
            <PriceTag $top={726}>1,952.00</PriceTag>
            <PriceTag $top={771}>1,938.00</PriceTag>
            <PriceTag $top={835}>1,918.00</PriceTag>
            <PriceTag $top={803}>1,928.00</PriceTag>
            <PriceTag $top={870}>1,907.00</PriceTag>
            <Expand><ExpandIcon size={32} color="#858585" /></Expand>
            <Assistant><Eye /><Eye /></Assistant>
        </ChartPanel>

        <MacdPanel>
            <MacdChart />
            <Legend $gap={15} $top={8}>
                <LegendItem $spacing={0.15} $color="#77797b">MACD(12,26,9)</LegendItem>
                <LegendItem $spacing={-0.05} $color="#f0b51d">MACD:2.87</LegendItem>
                <LegendItem $spacing={-0.3} $color="#de2775">DIF:3.40</LegendItem>
                <LegendItem $spacing={-0.3} $color="#a52fc8">DEA:0.53</LegendItem>
            </Legend>
        </MacdPanel>

        <BottomBar>
            <NavItem>
                <svg width={60} height={60} viewBox="0 0 60 60" fill="none" stroke="#060708" strokeWidth={4.5}>
                    <path d="M5 20A27 27 0 0 1 57 30" />
                    <path d="M55 40A27 27 0 0 1 3 30" />
                    <path d="M47 27L59 33V23ZM13 33L1 27V37ZM30 24L36 30L30 36L24 30Z" fill="#060708" stroke="none" />
                </svg>
                现货
            </NavItem>
            <NavItem>
                <svg width={56} height={60} viewBox="0 0 56 60" fill="none" stroke="#060708" strokeWidth={4.5}>
                    <path d="M4 55L51 9M29 7.500H51.500V29M14 11L23.500 20.500L14 30L4.500 20.500ZM39 35L48.500 44.500L39 54L29.500 44.500Z" />
                </svg>
                杠杆
            </NavItem>
            <NavItem>
                <svg width={60} height={60} viewBox="0 0 60 60" fill="none" stroke="#060708" strokeWidth={4.5}>
                    <rect x={5.5} y={13} width={49} height={43} rx={1} />
                    <path d="M22 5.500H38M2 26V40M58 26V40" strokeWidth={5} />
                    <g fill="#060708" stroke="none"><circle cx={21.5} cy={34} r={4.5} /><circle cx={38.5} cy={34} r={4.5} /></g>
                </svg>
                机器人
            </NavItem>
            <TradeButton $color="#f74b5f" $gap={13.5}>开仓</TradeButton>
            <TradeButton $color="#2bc388" $gap={28}>平仓</TradeButton>
        </BottomBar>
        <HomeBar />

        <Floating>
            <FloatTop>
                <svg width={32} height={33} viewBox="0 0 32 33" fill="none" stroke="#bcbdbe" strokeWidth={4.5}>
                    <path d="M14 30H2.500V2.500H29.500V14" />
                    <path d="M17 18.500H30L25.500 22.500L32 29L28.500 32L22 26L17.500 31Z" fill="#bcbdbe" stroke="none" />
                </svg>
                <ExpandIcon size={33} color="#bcbdbe" />
            </FloatTop>
            <FloatBody>
                <div>
                    <FloatLine $size={39.2}>ETHUSDT</FloatLine>
                    <FloatLine $size={41.8} $bold $red>1,978.15</FloatLine>
                    <FloatLine $size={40} $red>+1.53%</FloatLine>
                </div>
                <FloatScroll />
            </FloatBody>
            <FloatLogo><GateMark size={30} color="#888b90" />Gate</FloatLogo>
        </Floating>
    </Screen>
);

export default App;
